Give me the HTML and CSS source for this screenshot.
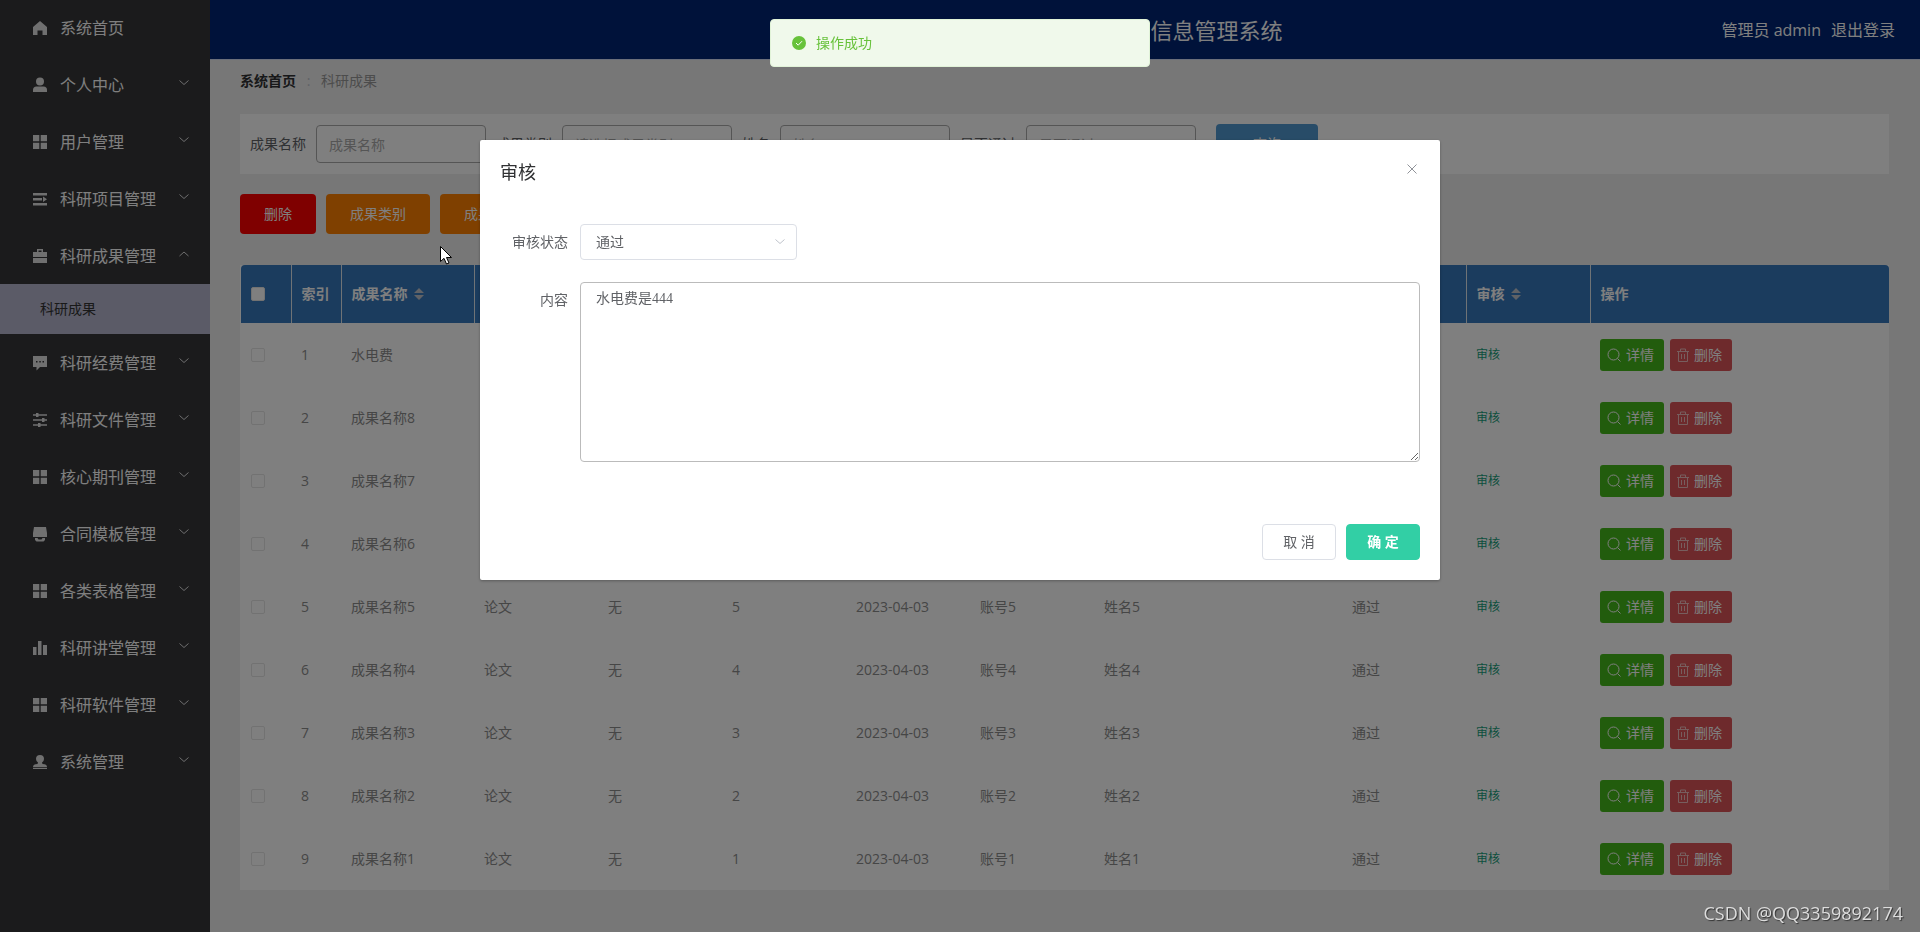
FILE: index.html
```html
<!DOCTYPE html>
<html lang="zh-CN">
<head>
<meta charset="utf-8">
<title>科研成果</title>
<link rel="stylesheet" href="styles.css">
</head>
<body>
<svg class="sprite" width="0" height="0" aria-hidden="true">
  <symbol id="home" viewBox="0 0 16 16"><path d="M8 1 15 7v8h-4.500v-4.500h-5V15H1V7z"/></symbol>
  <symbol id="user" viewBox="0 0 16 16"><circle cx="8" cy="4.500" r="4"/><path d="M1 15v-2q0-3.500 3.500-3.500h7q3.500 0 3.500 3.500v2z"/></symbol>
  <symbol id="grid" viewBox="0 0 16 16"><path d="M1 1h6.300v6.300H1zM8.700 1H15v6.300H8.700zM1 8.700h6.300V15H1zM8.700 8.700H15V15H8.700z"/></symbol>
  <symbol id="lines" viewBox="0 0 16 16"><path d="M1 2h14v2.500H1zM1 7h9v2.500H1zM1 12h14v2.500H1zM11 5.500 15 8.200 11 11z"/></symbol>
  <symbol id="case" viewBox="0 0 16 16"><path fill-rule="evenodd" d="M5 4V1h6v3h4v5H1V4zM6.500 2.500V4h3V2.500zM1 10h14v5H1z"/></symbol>
  <symbol id="chat" viewBox="0 0 16 16"><path fill-rule="evenodd" d="M1 1h14v11H8l-3.500 3.500V12H1zM4 6v1.500h1.500V6zM7.300 6v1.500h1.500V6zM10.500 6v1.500H12V6z"/></symbol>
  <symbol id="tune" viewBox="0 0 16 16"><path d="M1 2.300h14v1.500H1zM1 7.300h14v1.500H1zM1 12.300h14v1.500H1zM4 1h2.500v4H4zM10 6h2.500v4H10zM6 11h2.500v4H6z"/></symbol>
  <symbol id="cup" viewBox="0 0 16 16"><path d="M2 1h12l1 6v4H1V7zM3 12h2.500l1 1.500h3l1-1.500H13v2l-1.500 1.500h-7L3 14z"/></symbol>
  <symbol id="bars" viewBox="0 0 16 16"><path d="M1 7h3.500v8H1zM6 1h3.500v14H6zM11 5h4v10h-4z"/></symbol>
  <symbol id="stamp" viewBox="0 0 16 16"><path d="M8 1a4 4 0 0 1 4 4q0 2-2 3.500l.5 1.500q4.500 0 4.500 3H1q0-3 4.500-3L6 8.500Q4 7 4 5a4 4 0 0 1 4-4zM1 13.800h14V15H1z"/></symbol>
  <symbol id="down" viewBox="0 0 12 12"><path class="line" d="m1.500 3.500 4.500 4 4.500-4"/></symbol>
  <symbol id="up" viewBox="0 0 12 12"><path class="line" d="m1.500 8 4.500-4 4.500 4"/></symbol>
  <symbol id="sort" viewBox="0 0 10 12"><path d="m5 0 5 5H0zM0 7h10l-5 5z"/></symbol>
  <symbol id="search" viewBox="0 0 14 14"><circle class="line" cx="6.500" cy="6.500" r="5.500"/><path class="line" d="m10.500 10.500 3 3"/></symbol>
  <symbol id="trash" viewBox="0 0 14 14"><path class="line" d="M1 3.500h12M4.500 3V1h5v2M2.500 3.500v10h9v-10M5.500 6v5M8.500 6v5"/></symbol>
  <symbol id="close" viewBox="0 0 12 12"><path class="line" d="m1.500 1.500 9 9m0-9-9 9"/></symbol>
</svg>

<div class="app">
  <nav class="sidebar" id="sidebar"></nav>
  <div class="page">
    <header class="topbar">
      <h1 class="topbar-title">信息管理系统</h1>
      <div class="account"><span>管理员 admin</span><a class="logout" href="#">退出登录</a></div>
    </header>
    <main class="content">
      <div class="crumbs"><a class="crumb-home" href="#">系统首页</a><span class="crumb-dot">:</span><span>科研成果</span></div>
      <form class="filters">
        <label class="filter">成果名称<input class="field" type="text" placeholder="成果名称"></label>
        <label class="filter">成果类别<input class="field" type="text" placeholder="请选择成果类别"></label>
        <label class="filter">姓名<input class="field" type="text" placeholder="姓名"></label>
        <label class="filter">是否通过<input class="field" type="text" placeholder="是否通过"></label>
        <button class="query" type="button">查询</button>
      </form>
      <div class="actions">
        <button class="action action-delete" type="button">删除</button>
        <button class="action" type="button">成果类别</button>
        <button class="action" type="button">成果类别</button>
      </div>
      <div class="table-card">
      <table class="grid">
        <colgroup><col class="c-small"><col class="c-small"><col class="c-name"><col class="c-mid"><col class="c-mid"><col class="c-mid"><col class="c-mid"><col class="c-mid"><col class="c-mid"><col class="c-mid"><col class="c-mid"><col class="c-mid"><col></colgroup>
        <thead><tr>
          <th><input class="tick tick-all" type="checkbox" aria-label="全选"></th><th>索引</th>
          <th>成果名称<svg class="sort"><use href="#sort"/></svg></th>
          <th></th><th></th><th></th><th></th><th></th><th></th><th></th><th></th>
          <th>审核<svg class="sort"><use href="#sort"/></svg></th><th>操作</th>
        </tr></thead>
        <tbody id="rows"></tbody>
      </table>
      </div>
    </main>
  </div>
</div>

<div class="mask">
  <section class="dialog" role="dialog" aria-labelledby="dialog-title">
    <div class="dialog-head"><h2 class="dialog-title" id="dialog-title">审核</h2><button class="close" type="button" aria-label="关闭"><svg><use href="#close"/></svg></button></div>
    <div class="dialog-body">
      <div class="form-row"><label class="form-label" for="status">审核状态</label>
        <div class="select-box"><select class="select" id="status"><option>通过</option></select><svg class="select-arrow"><use href="#down"/></svg></div></div>
      <div class="form-row"><label class="form-label" for="note">内容</label><textarea class="note" id="note">水电费是444</textarea></div>
    </div>
    <div class="dialog-foot"><button class="btn" type="button">取 消</button><button class="btn btn-ok" type="button">确 定</button></div>
  </section>
</div>

<div class="toast" role="status"><svg class="toast-icon" viewBox="0 0 14 14"><circle cx="7" cy="7" r="7"/><path d="m4 7 2.200 2.200L10 5.200"/></svg>操作成功</div>
<svg class="cursor" viewBox="0 0 12 19"><path d="M.5.500v15l3.500-3.200 2.500 5.700 2.500-1-2.500-5.500h5z"/></svg>
<div class="watermark">CSDN @QQ3359892174</div>
<script src="app.js"></script>
</body>
</html>
```
FILE: styles.css
```css
* { box-sizing: border-box; }
body { margin: 0; font: 14px/20px "Open Sans", "Noto Sans CJK SC", sans-serif; color: #606266; }
button, input, select { font: inherit; }
svg { fill: currentColor; flex: none; }
.sprite { display: block; height: 0; }
.line { fill: none; stroke: currentColor; }
.app { display: flex; min-height: 100vh; background: #eee; }

.sidebar { width: 210px; flex: none; background: #363638; color: #fff; font-size: 16px; }
.menu-item { display: flex; align-items: center; height: 57px; padding: 0 20px 0 32px; color: #fff; text-decoration: none; }
.menu-item:first-child { height: 56px; }
.menu-icon { width: 16px; height: 16px; margin-right: 12px; color: #e0e0e0; }
.menu-arrow { width: 12px; height: 12px; margin: 0 0 4px auto; color: #ddd; }
.submenu { display: flex; align-items: center; height: 50px; padding-left: 40px; background: #b6b6ce; color: #333; font-size: 14px; text-decoration: none; }

.page { flex: 1; min-width: 0; }
.topbar { display: grid; grid-template-columns: 55% 1fr auto; align-items: center; height: 60px; background: #002474; border-bottom: 1px solid #d4dcf4; color: #fff; }
.topbar-title { grid-column: 2; margin: 0; font-size: 22px; line-height: 32px; font-weight: 400; }
.account { display: flex; gap: 10px; padding-right: 25px; font-size: 16px; }
.logout { color: #fff; text-decoration: none; }
.content { padding: 10px 31px 40px 30px; }
.crumbs { display: flex; height: 22px; align-items: center; color: #999; }
.crumb-home { color: #303133; font-weight: 700; text-decoration: none; }
.crumb-dot { width: 25px; text-align: center; color: #c0c4cc; }
.filters { display: flex; align-items: center; gap: 10px; height: 60px; margin: 22px 0 20px; padding: 0 10px; background: #fff; }
.filter { display: flex; align-items: center; gap: 10px; }
.field { width: 170px; height: 38px; padding: 0 12px; border: 1px solid #aaa; border-radius: 4px; background: #fff; }
.field::placeholder { color: #aaa; }
.query { width: 102px; height: 40px; margin-left: 10px; border: 0; border-radius: 4px; background: #5098d0; color: #fff; }
.actions { display: flex; gap: 10px; margin-bottom: 31px; }
.action { height: 40px; padding: 0 24px; border: 0; border-radius: 4px; background: #ff8000; color: #fff; }
.action-delete { background: #f00; }

.table-card { padding-left: 1px; background: #fff; }
.grid { width: 100%; table-layout: fixed; border-collapse: collapse; }
.c-small { width: 50px; }
.c-name { width: 133px; }
.c-mid { width: 124px; }
.grid th { height: 58px; padding: 0 10px; background: #3678bc; border-right: 1px solid #dfe6ec; color: #fff; text-align: left; font-weight: 700; white-space: nowrap; }
.grid th:first-child { border-top-left-radius: 4px; }
.grid th:last-child { border-right: 0; border-top-right-radius: 4px; }
.grid td { height: 63px; padding: 0 10px; white-space: nowrap; color: #8c8c8c; }
.sort { width: 10px; height: 12px; margin-left: 6px; color: #c0c4cc; vertical-align: -1px; }
.tick { display: block; appearance: none; width: 14px; height: 14px; margin: 0; border: 1px solid #e4e4e4; border-radius: 2px; background: #fff; }
.review { padding: 0; border: 0; background: none; color: #18a07c; font-size: 12px; }
.ops { display: flex; gap: 6px; }
.op { display: flex; align-items: center; gap: 5px; height: 32px; padding: 0 10px 0 7px; border: 0; border-radius: 3px; background: #44b81a; color: #fff; }
.op svg { width: 14px; height: 14px; }
.op-del { background: #dc5458; padding-left: 6px; gap: 4px; }
.op-del svg { color: #eebcbc; }

.mask { position: fixed; inset: 0; background: rgba(0, 0, 0, .5); }
.dialog { width: 50%; margin: 15vh auto 0; background: #fff; border-radius: 2px; box-shadow: 0 1px 3px rgba(0, 0, 0, .3); }
.dialog-head { display: flex; justify-content: space-between; padding: 20px 20px 10px; }
.dialog-title { margin: 0; font-size: 18px; line-height: 24px; font-weight: 400; color: #303133; }
.close { height: 16px; padding: 0; border: 0; background: none; color: #909399; }
.close svg { width: 16px; height: 12px; }
.dialog-body { padding: 30px 20px; }
.form-row { display: flex; align-items: flex-start; margin-bottom: 22px; }
.form-label { width: 80px; padding-right: 12px; line-height: 36px; text-align: right; }
.select-box { position: relative; width: 217px; }
.select { appearance: none; width: 100%; height: 36px; padding: 0 15px; border: 1px solid #dcdfe6; border-radius: 4px; background: #fff; color: #606266; }
.select-arrow { position: absolute; right: 11px; top: 12px; width: 12px; height: 12px; color: #c0c4cc; }
.note { flex: 1; height: 180px; padding: 5px 15px; border: 1px solid #bbb; border-radius: 4px; color: #606266; font: 14px/21px "Liberation Serif", "Noto Sans CJK SC", serif; resize: vertical; }
.dialog-foot { display: flex; justify-content: flex-end; gap: 10px; padding: 10px 20px 20px; }
.btn { width: 74px; height: 36px; border: 1px solid #dcdfe6; border-radius: 4px; background: #fff; color: #606266; }
.btn-ok { border-color: #32cfa5; background: #32cfa5; color: #fff; font-weight: 700; }

.toast { position: fixed; top: 19px; left: 50%; display: flex; align-items: center; gap: 10px; width: 380px; height: 48px; margin-left: -190px; padding-left: 21px; border: 1px solid #e1f3d8; border-radius: 4px; background: #f0f9eb; color: #67c23a; }
.toast-icon { width: 14px; height: 14px; }
.toast-icon path { fill: none; stroke: #fff; }
.cursor { position: fixed; left: 440px; top: 246px; width: 12px; height: 19px; fill: #fff; stroke: #000; }
.watermark { position: fixed; right: 17px; bottom: 7px; color: #ddd; font: 18px/24px "Open Sans", sans-serif; text-shadow: 1px 1px 1px #333; }
```
FILE: app.js
```js
const icon = (id, cls) => `<svg class="${cls || ''}"><use href="#${id}"/></svg>`;
const menu = [
  ['home', '系统首页'], ['user', '个人中心'], ['grid', '用户管理'], ['lines', '科研项目管理'],
  ['case', '科研成果管理'], ['chat', '科研经费管理'], ['tune', '科研文件管理'], ['grid', '核心期刊管理'],
  ['cup', '合同模板管理'], ['grid', '各类表格管理'], ['bars', '科研讲堂管理'], ['grid', '科研软件管理'], ['stamp', '系统管理']
];
document.getElementById('sidebar').innerHTML = menu.map(([id, name], i) => {
  const arrow = i === 0 ? '' : icon(i === 4 ? 'up' : 'down', 'menu-arrow');
  const sub = i === 4 ? '<a class="submenu" href="#">科研成果</a>' : '';
  return `<a class="menu-item" href="#">${icon(id, 'menu-icon')}${name}${arrow}</a>${sub}`;
}).join('');

const ops = `<div class="ops"><button class="op" type="button">${icon('search')}详情</button><button class="op op-del" type="button">${icon('trash')}删除</button></div>`;
document.getElementById('rows').innerHTML = [9, 8, 7, 6, 5, 4, 3, 2, 1].map((n, i) => {
  const name = n === 9 ? '水电费' : '成果名称' + n;
  const info = i < 4 ? ['', '', '', '', '', '', '', ''] : ['论文', '无', n, '2023-04-03', '账号' + n, '姓名' + n, '', '通过'];
  return `<tr><td><input class="tick" type="checkbox" aria-label="选择第${i + 1}行"></td><td>${i + 1}</td><td>${name}</td>`
    + info.map(v => `<td>${v}</td>`).join('')
    + `<td><button class="review" type="button">审核</button></td><td>${ops}</td></tr>`;
}).join('');
```
